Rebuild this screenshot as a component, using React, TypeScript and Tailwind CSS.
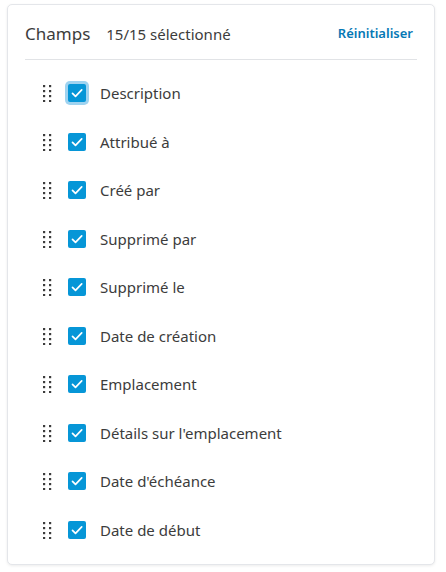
const fields = [
  "Description",
  "Attribué à",
  "Créé par",
  "Supprimé par",
  "Supprimé le",
  "Date de création",
  "Emplacement",
  "Détails sur l'emplacement",
  "Date d'échéance",
  "Date de début",
];

function DragHandle() {
  return (
    <svg width="10" height="18" viewBox="0 0 10 18" className="shrink-0">
      {[0, 1, 2, 3].map((r) =>
        [0, 1].map((c) => (
          <rect key={`${r}-${c}`} x={1 + c * 6} y={1 + r * 5} width="2.2" height="2.2" fill="#3c3c3c" />
        ))
      )}
    </svg>
  );
}

function Checkbox({ focused }: { focused?: boolean }) {
  return (
    <span
      className={`flex h-[18px] w-[18px] shrink-0 items-center justify-center rounded-[2px] bg-[#0696d7] ${
        focused ? "ring-[3px] ring-[#9fd3f0]" : ""
      }`}
    >
      <svg width="14" height="14" viewBox="0 0 14 14" fill="none">
        <path d="M2.5 7.3l3 3 6.2-6.5" stroke="white" strokeWidth="1.7" strokeLinecap="round" strokeLinejoin="round" />
      </svg>
    </span>
  );
}

export default function App() {
  return (
    <div className="h-[572px] w-[446px] bg-white pl-[7px] pt-[4px] font-['Noto_Sans',sans-serif]">
      <div className="h-[561px] w-[428px] rounded-[5px] border border-[#e4e6ea] bg-white px-[17px] shadow-[0_1px_3px_rgba(0,0,0,0.08)]">
        <div className="flex h-[54px] items-center pt-[4px]">
          <span className="text-[17px] text-[#3c3c3c]">Champs</span>
          <span className="ml-[16px] text-[15px] text-[#3c3c3c]">15/15 sélectionné</span>
          <button className="ml-auto pr-[4px] text-[13px] font-semibold text-[#0678b5]">Réinitialiser</button>
        </div>
        <div className="h-px bg-[#e1e3e6]" />
        <ul className="pt-[9px]">
          {fields.map((f, i) => (
            <li key={f} className="flex h-[48.5px] items-center pl-[17px]">
              <DragHandle />
              <span className="ml-[16px]">
                <Checkbox focused={i === 0} />
              </span>
              <span className="ml-[14px] text-[15px] text-[#3c3c3c]">{f}</span>
            </li>
          ))}
        </ul>
      </div>
    </div>
  );
}
